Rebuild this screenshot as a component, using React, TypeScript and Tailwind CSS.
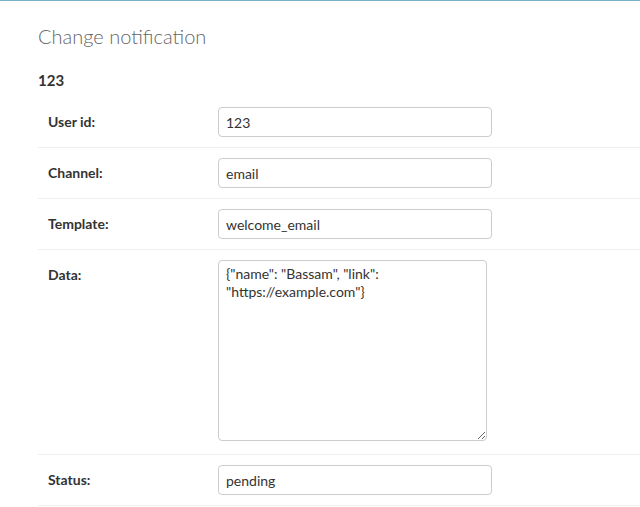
import React from 'react';

const font = { fontFamily: 'Lato, "Noto Sans", system-ui, sans-serif' };

function Row({ label, value, children }: { label: string; value?: string; children?: React.ReactNode }) {
  return (
    <div className="flex border-b border-[#eee] p-[10px]">
      <label className="w-[170px] shrink-0 pt-[5px] text-[14px] leading-[20px] font-bold text-[#333]">{label}</label>
      {children ?? (
        <input
          readOnly
          value={value}
          className="w-[274px] h-[30px] rounded-[4px] border border-[#ccc] px-[7px] text-[14px] text-[#333] outline-none"
          style={font}
        />
      )}
    </div>
  );
}

export default function App() {
  return (
    <div className="min-h-screen bg-white border-t border-[#79aec8]" style={font}>
      <div className="pl-[38px]">
        <h1 className="pt-[23px] text-[20px] leading-[24px] font-light text-[#666]">Change notification</h1>
        <h2 className="mt-[22px] text-[15px] leading-[20px] font-bold text-[#333]">123</h2>
        <div className="mt-[7px]">
          <Row label="User id:" value="123" />
          <Row label="Channel:" value="email" />
          <Row label="Template:" value="welcome_email" />
          <Row label="Data:">
            <textarea
              readOnly
              defaultValue={'{"name": "Bassam", "link": "https://example.com"}'}
              className="w-[269px] h-[181px] rounded-[4px] border border-[#ccc] px-[7px] py-[4px] text-[14px] leading-[18px] text-[#333] outline-none mb-[3px]"
              style={font}
            />
          </Row>
          <Row label="Status:" value="pending" />
        </div>
      </div>
    </div>
  );
}
